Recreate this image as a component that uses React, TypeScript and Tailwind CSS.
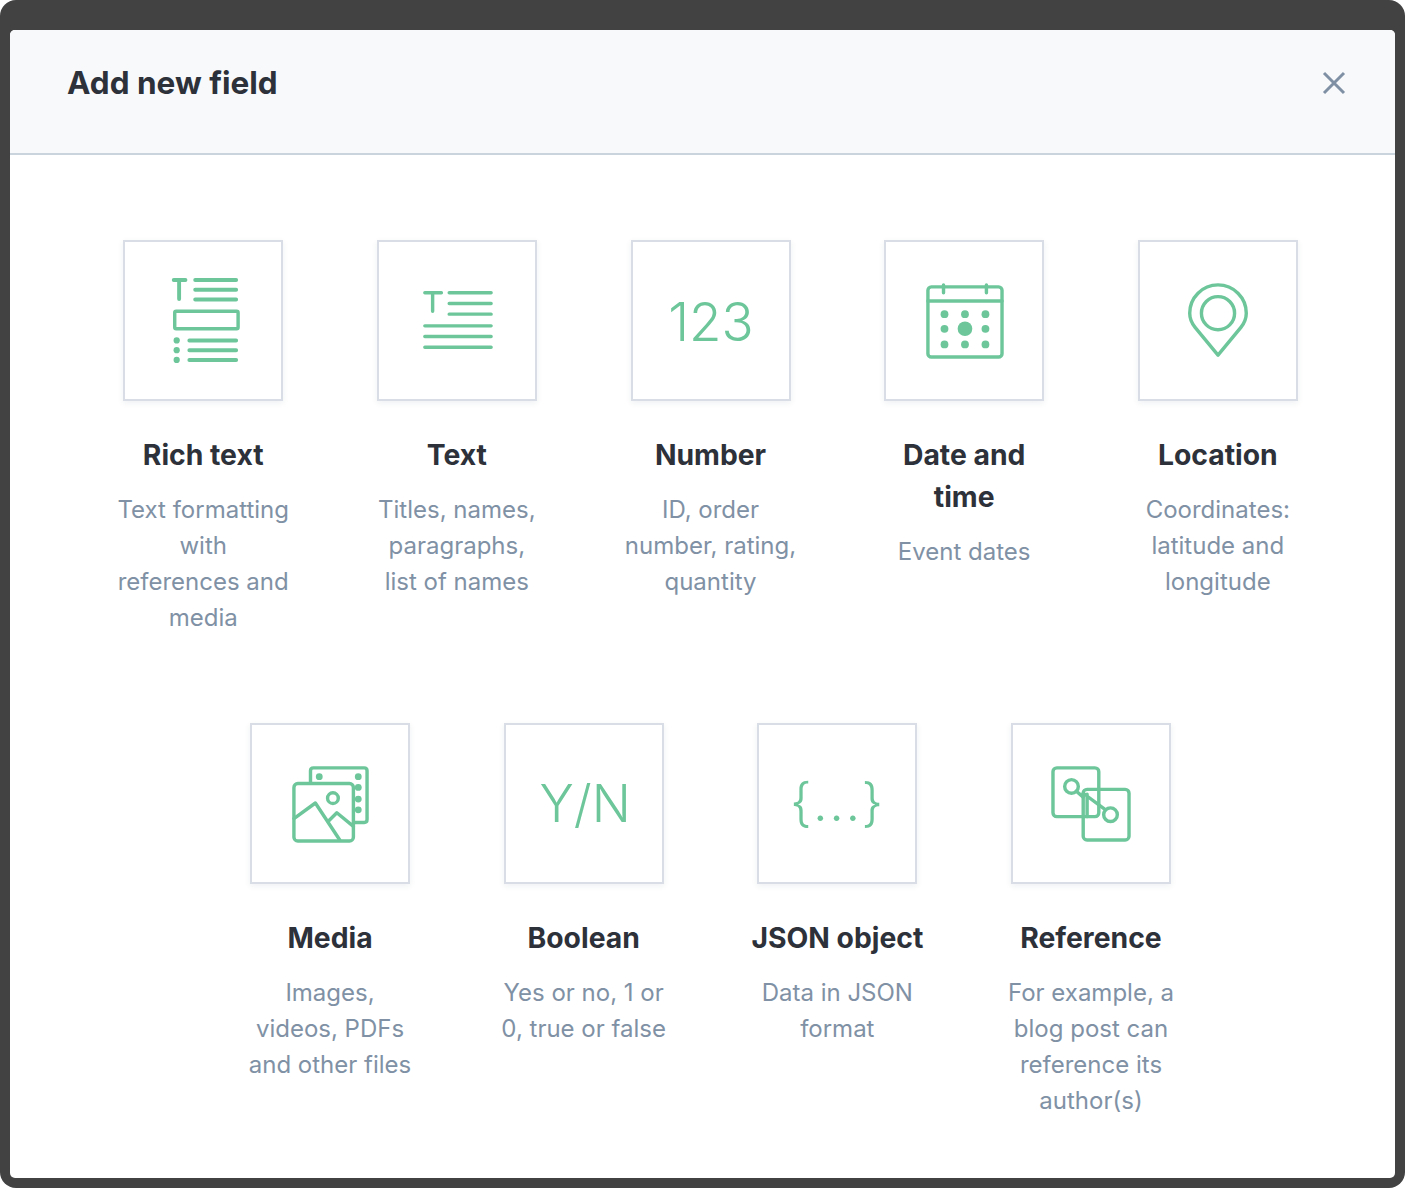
import type { ReactNode } from 'react'

const strokeProps = {
  fill: 'none',
  stroke: 'currentColor',
  strokeWidth: 3.5,
  strokeLinecap: 'round' as const,
  strokeLinejoin: 'round' as const,
}

function RichTextIcon() {
  return (
    <svg width="160" height="160" viewBox="0 0 160 160" {...strokeProps}>
      <path d="M50 39H62M55.500 39V58.500M72 39H114M72 49H114M72 59H114" strokeWidth="4" />
      <rect x="51" y="71" width="65" height="18" rx="1.500" />
      <path d="M66 101H114M66 111H114M66 121H114" strokeWidth="4" />
      <g fill="currentColor" stroke="none">
        <circle cx="53" cy="101" r="3.200" />
        <circle cx="53" cy="111" r="3.200" />
        <circle cx="53" cy="121" r="3.200" />
      </g>
    </svg>
  )
}

function TextIcon() {
  return (
    <svg width="160" height="160" viewBox="0 0 160 160" {...strokeProps}>
      <path d="M47 52H64M55 52V71M72 52H115M72 63H115M72 74H115M47 86H115M47 97H115M47 108H115" />
    </svg>
  )
}

function CalendarIcon() {
  return (
    <svg width="160" height="160" viewBox="0 0 160 160" {...strokeProps}>
      <rect x="43" y="46" width="76" height="72" rx="3.500" />
      <path d="M43 60.500H119M59 44V52M103 44V52" />
      <g fill="currentColor" stroke="none">
        <circle cx="60" cy="74" r="4" />
        <circle cx="81" cy="74" r="4" />
        <circle cx="102" cy="74" r="4" />
        <circle cx="60" cy="89" r="4" />
        <circle cx="81" cy="89" r="7.500" />
        <circle cx="102" cy="89" r="4" />
        <circle cx="60" cy="105" r="4" />
        <circle cx="81" cy="105" r="4" />
        <circle cx="102" cy="105" r="4" />
      </g>
    </svg>
  )
}

function PinIcon() {
  return (
    <svg width="160" height="160" viewBox="0 0 160 160" {...strokeProps}>
      <path d="M80 116L56.500 87.500C52.500 82.500 51 78 51 73C51 57 64 44 80 44C96 44 109 57 109 73C109 78 107.500 82.500 103.500 87.500Z" />
      <circle cx="80" cy="73" r="17" />
    </svg>
  )
}

function MediaIcon() {
  return (
    <svg width="160" height="160" viewBox="0 0 160 160" {...strokeProps}>
      <path d="M60 59V47C60 45 61 44 63 44H115C117 44 118 45 118 47V97C118 99 117 100 115 100H104" />
      <rect x="43" y="60" width="61" height="59" rx="4" />
      <path d="M43 96L65 80L90 118M78 99L87 90L104 104" />
      <circle cx="83" cy="75" r="5.500" />
      <g fill="currentColor" stroke="none">
        <circle cx="69" cy="53" r="3.500" />
        <circle cx="109" cy="53" r="3.500" />
        <circle cx="109" cy="64" r="3.500" />
        <circle cx="109" cy="76" r="3.500" />
        <circle cx="109" cy="87" r="3.500" />
      </g>
    </svg>
  )
}

function ReferenceIcon() {
  return (
    <svg width="160" height="160" viewBox="0 0 160 160" {...strokeProps}>
      <rect x="41" y="44" width="47" height="50" rx="4" />
      <rect x="72" y="66" width="47" height="52" rx="4" />
      <circle cx="60" cy="63" r="7" />
      <circle cx="100" cy="92" r="7" />
      <path d="M65 68L72 74M72 70L95 87M76 71V94" />
    </svg>
  )
}

function GlyphIcon({ children, className }: { children: ReactNode; className: string }) {
  return <span className={`font-[350] leading-none text-[#6cc69a] ${className}`}>{children}</span>
}

type Field = { title: string; lines: string[]; icon: ReactNode }

const firstRow: Field[] = [
  { title: 'Rich text', lines: ['Text formatting', 'with', 'references and', 'media'], icon: <RichTextIcon /> },
  { title: 'Text', lines: ['Titles, names,', 'paragraphs,', 'list of names'], icon: <TextIcon /> },
  { title: 'Number', lines: ['ID, order', 'number, rating,', 'quantity'], icon: <GlyphIcon className="pl-px pt-1 text-[53px]">123</GlyphIcon> },
  { title: 'Date and time', lines: ['Event dates'], icon: <CalendarIcon /> },
  { title: 'Location', lines: ['Coordinates:', 'latitude and', 'longitude'], icon: <PinIcon /> },
]

const secondRow: Field[] = [
  { title: 'Media', lines: ['Images,', 'videos, PDFs', 'and other files'], icon: <MediaIcon /> },
  { title: 'Boolean', lines: ['Yes or no, 1 or', '0, true or false'], icon: <GlyphIcon className="pl-[3px] pt-px text-[51.500px]">Y/N</GlyphIcon> },
  { title: 'JSON object', lines: ['Data in JSON', 'format'], icon: <GlyphIcon className="text-[52px] tracking-[1.500px]">{'{...}'}</GlyphIcon> },
  { title: 'Reference', lines: ['For example, a', 'blog post can', 'reference its', 'author(s)'], icon: <ReferenceIcon /> },
]

function FieldCard({ field }: { field: Field }) {
  return (
    <div className="flex w-[180px] flex-col items-center text-center">
      <div className="flex h-[161px] w-40 items-center justify-center border-2 border-[#d9dde6] bg-white pb-px text-[#6cc69a] shadow-[0_2px_6px_rgba(40,60,90,0.08)]">
        {field.icon}
      </div>
      <h3 className="mt-[33px] text-[28.300px] font-bold leading-[42px] text-[#2d3139]">{field.title}</h3>
      <div className="mt-4 whitespace-nowrap text-[24px] leading-9 text-[#8091a5]">
        {field.lines.map((line) => (
          <div key={line}>{line}</div>
        ))}
      </div>
    </div>
  )
}

export default function App() {
  return (
    <div className="h-[1188px] w-[1405px] bg-white font-['Inter',sans-serif]">
      <div className="flex h-full flex-col rounded-[16px] bg-[#424242] px-[10px] pb-[10px] pt-[30px]">
        <div className="flex flex-1 flex-col overflow-hidden rounded-[5px] bg-white">
          <div className="flex h-[125px] items-center justify-between border-b-2 border-[#c9d4dc] bg-[#f7f9fb] pb-[18px] pl-[57px] pr-[48px]">
            <h1 className="text-[31.500px] font-bold text-[#2d3139]">Add new field</h1>
            <svg width="26" height="26" viewBox="0 0 26 26" fill="none" stroke="#7f8fa4" strokeWidth="3">
              <path d="M3 3L23 23M23 3L3 23" />
            </svg>
          </div>
          <div className="flex flex-col gap-[87px] pl-4 pt-[85px]">
            <div className="flex justify-center gap-[73.670px]">
              {firstRow.map((field) => (
                <FieldCard key={field.title} field={field} />
              ))}
            </div>
            <div className="flex justify-center gap-[73.670px]">
              {secondRow.map((field) => (
                <FieldCard key={field.title} field={field} />
              ))}
            </div>
          </div>
        </div>
      </div>
    </div>
  )
}
